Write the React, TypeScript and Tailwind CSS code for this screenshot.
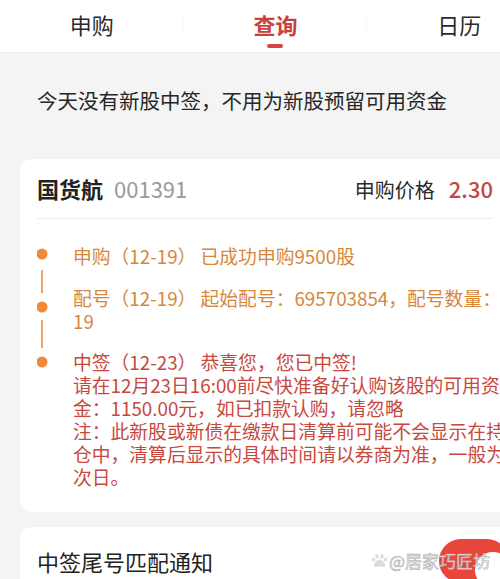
import { FaPaw } from "react-icons/fa"

const tabs = [
  { label: "申购", active: false },
  { label: "查询", active: true },
  { label: "日历", active: false },
]

function TimelineRail() {
  return (
    <svg width="12" height="126" viewBox="0 0 12 126" className="shrink-0">
      <circle cx="5" cy="10" r="5.5" fill="#f08a3a" />
      <rect x="4" y="26" width="2" height="23" fill="#eda66e" />
      <circle cx="5" cy="63" r="5.5" fill="#f08a3a" />
      <rect x="4" y="76" width="2" height="28" fill="#eda66e" />
      <circle cx="5" cy="118" r="5.5" fill="#f08a3a" />
    </svg>
  )
}

export default function App() {
  return (
    <div className="relative h-[579px] w-[500px] overflow-hidden bg-[#f4f4f4] font-['Noto_Sans_CJK_SC','Noto_Sans',sans-serif] text-[#222]">
      {/* tabs */}
      <div className="h-[53px] w-[500px] overflow-hidden border-b border-[#ececec] bg-white">
        <div className="grid h-full w-[551px] grid-cols-3">
          {tabs.map((t, i) => (
            <div key={t.label} className="relative flex items-center justify-center">
              <span
                className={
                  t.active
                    ? "text-[22px] leading-[30px] font-bold text-[#c8413b] -mt-[4px]"
                    : "text-[22px] leading-[30px] text-[#2b2b2b] -mt-[4px]"
                }
              >
                {t.label}
              </span>
              {t.active && (
                <span className="absolute bottom-[4px] left-1/2 h-[4px] w-[16px] -translate-x-1/2 rounded-full bg-[#d0463f]" />
              )}
              {i < 2 && (
                <span className="absolute right-0 top-[19px] h-[12px] w-px bg-[#f7f7f7]" />
              )}
            </div>
          ))}
        </div>
      </div>

      <p className="whitespace-nowrap px-[37px] pt-[32px] text-[20.5px] leading-[30px] text-[#262626]">
        今天没有新股中签，不用为新股预留可用资金
      </p>

      {/* stock card */}
      <div className="ml-[20px] mt-[44px] w-[490px] rounded-[12px] bg-white px-[17px] pb-[24px]">
        <div className="flex h-[60px] items-center justify-between border-b border-[#eeeeee]">
          <div className="flex items-baseline gap-[11px]">
            <span className="text-[22px] font-bold text-[#222]">国货航</span>
            <span className="text-[22px] text-[#9a9a9a]">001391</span>
          </div>
          <div className="flex items-baseline gap-[14px]">
            <span className="text-[20px] text-[#2a2a2a]">申购价格</span>
            <span className="text-[22px] font-medium text-[#c4483f]">2.30</span>
          </div>
        </div>

        <div className="flex gap-[24px] pt-[25px]">
          <TimelineRail />
          <div className="flex flex-col whitespace-nowrap text-[18.8px] leading-[23px]">
            <p className="text-[#d6873c]">申购（12-19） 已成功申购9500股</p>
            <p className="mt-[19px] text-[#d6873c]">
              配号（12-19） 起始配号：695703854，配号数量：
              <br />
              19
            </p>
            <p className="mt-[18px] text-[#c8483d]">
              中签（12-23） 恭喜您，您已中签!
              <br />
              请在12月23日16:00前尽快准备好认购该股的可用资
              <br />
              金：1150.00元，如已扣款认购，请忽略
              <br />
              注：此新股或新债在缴款日清算前可能不会显示在持
              <br />
              仓中，清算后显示的具体时间请以券商为准，一般为
              <br />
              次日。
            </p>
          </div>
        </div>
      </div>

      {/* notice card */}
      <div className="ml-[20px] mt-[15px] w-[490px] rounded-[12px] bg-white px-[17px]">
        <div className="flex h-[68px] items-center justify-between">
          <span className="text-[22px] text-[#222]">中签尾号匹配通知</span>
          <div className="relative mr-[-16px] h-[44px] w-[70px] rounded-full bg-[#e8463a]">
            <span className="absolute right-[-2px] top-[13px] h-[36px] w-[36px] rounded-full bg-white" />
          </div>
        </div>
      </div>

      {/* watermark */}
      <div className="absolute bottom-[6px] right-[10px] flex items-center gap-[2px] text-[17px] text-white/80 [-webkit-text-stroke:0.6px_#a8a8a8]">
        <FaPaw className="h-[15px] w-[15px] text-[#dcdcdc]" />
        <span>@居家巧匠坊</span>
      </div>
    </div>
  )
}
